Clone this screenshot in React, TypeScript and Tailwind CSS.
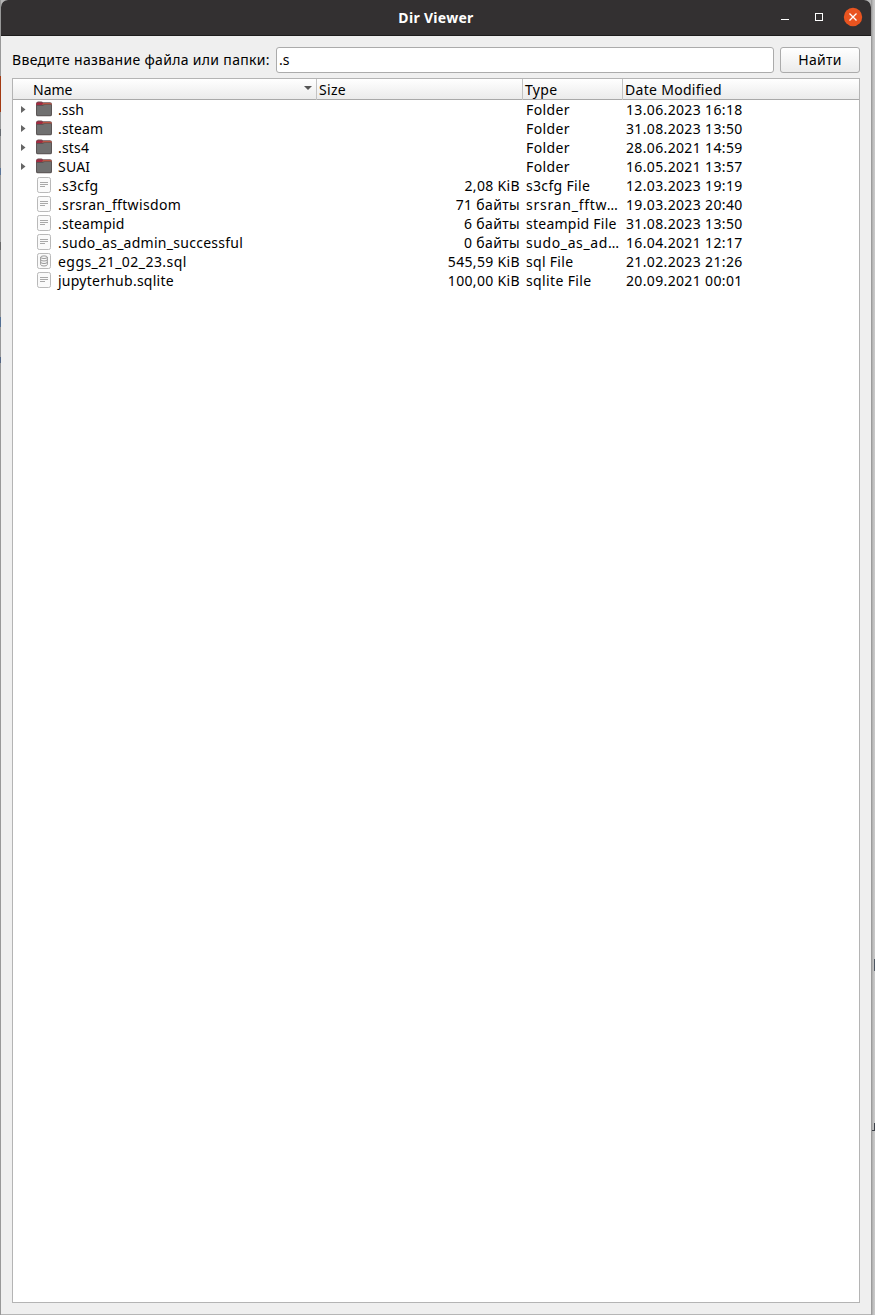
import React from "react";

type Kind = "folder" | "text" | "db";
type Row = { name: string; kind: Kind; size: string; type: string; date: string; track: string; typeTrack: string };

const rows: Row[] = [
  { name: ".ssh", kind: "folder", size: "", type: "Folder", date: "13.06.2023 16:18", track: "", typeTrack: "tracking-[0.4px]" },
  { name: ".steam", kind: "folder", size: "", type: "Folder", date: "31.08.2023 13:50", track: "tracking-[0.15px]", typeTrack: "tracking-[0.4px]" },
  { name: ".sts4", kind: "folder", size: "", type: "Folder", date: "28.06.2021 14:59", track: "tracking-[0.2px]", typeTrack: "tracking-[0.4px]" },
  { name: "SUAI", kind: "folder", size: "", type: "Folder", date: "16.05.2021 13:57", track: "tracking-[0.2px]", typeTrack: "tracking-[0.4px]" },
  { name: ".s3cfg", kind: "text", size: "2,08 KiB", type: "s3cfg File", date: "12.03.2023 19:19", track: "tracking-[0.3px]", typeTrack: "tracking-[0.33px]" },
  { name: ".srsran_fftwisdom", kind: "text", size: "71 байты", type: "srsran_fftw…", date: "19.03.2023 20:40", track: "tracking-[0.34px]", typeTrack: "tracking-[0.75px]" },
  { name: ".steampid", kind: "text", size: "6 байты", type: "steampid File", date: "31.08.2023 13:50", track: "tracking-[0.15px]", typeTrack: "tracking-[0.25px]" },
  { name: ".sudo_as_admin_successful", kind: "text", size: "0 байты", type: "sudo_as_ad…", date: "16.04.2021 12:17", track: "tracking-[0.27px]", typeTrack: "tracking-[0.6px]" },
  { name: "eggs_21_02_23.sql", kind: "db", size: "545,59 KiB", type: "sql File", date: "21.02.2023 21:26", track: "tracking-[0.45px]", typeTrack: "tracking-[0.3px]" },
  { name: "jupyterhub.sqlite", kind: "text", size: "100,00 KiB", type: "sqlite File", date: "20.09.2021 00:01", track: "tracking-[0.25px]", typeTrack: "tracking-[0.36px]" },
];

function FolderIcon() {
  return (
    <svg width="16" height="16" viewBox="0 0 16 16" className="block">
      <path d="M0 3Q0 .5 2 .5H5.3Q6.3 .5 6.8 1.3H14Q16 1.3 16 3.3V8H0Z" fill="#6c5155" />
      <path d="M.4 2.2Q.6 1.5 2 1.5H5.6Q6.6 1.5 7.2 2.4L6 4.5H.4Z" fill="#a32a40" />
      <path d="M7 2.2H14.2Q15.7 2.2 15.7 3.6V4.2H6Z" fill="#d2583f" />
      <path d="M0 5.1Q0 4 1.2 4H5.6Q6.5 4 7 3.6Q7.5 3.2 8.3 3.2H14.7Q16 3.2 16 4.4V13.4Q16 15.3 14.2 15.3H1.8Q0 15.3 0 13.4Z" fill="#5b5555" />
      <path d="M1 5H5.8Q6.9 5 7.6 4.5Q8.1 4.1 8.7 4.1H15V13.1Q15 14.3 13.8 14.3H2.2Q1 14.3 1 13.1Z" fill="#707070" />
    </svg>
  );
}

function FileIcon({ db }: { db: boolean }) {
  return (
    <svg width="16" height="16" viewBox="0 0 16 16" className="block">
      <rect x="1.5" y=".5" width="13" height="15" rx="1.8" fill="#fafafa" stroke="#b9b9b9" />
      {db ? (
        <g fill="none" stroke="#8c8c8c" strokeWidth=".9">
          <ellipse cx="8" cy="4.2" rx="3.3" ry="1.3" />
          <path d="M4.7 4.2V11.6Q4.7 13 8 13T11.3 11.6V4.2M4.7 6.6Q4.7 8 8 8T11.3 6.6M4.7 9.1Q4.7 10.5 8 10.5T11.3 9.1" />
        </g>
      ) : (
        <path d="M4 5.5H12M4 7.5H12M4 9.5H9" stroke="#a8a8a8" />
      )}
    </svg>
  );
}

const cols = "grid grid-cols-[304px_206px_100px_1fr]";

export default function App() {
  return (
    <div className="flex h-[1315px] w-[875px] overflow-hidden bg-[#b5b5b5] font-['Noto_Sans',sans-serif] text-[14px] text-black">
      <div className="flex w-px shrink-0 flex-col bg-[#989898]">
        <div className="mt-[76px] h-[36px] bg-[#a33a12]" />
        <div className="mt-[17px] h-[7px] bg-[#666b70]" />
        <div className="mt-[32px] h-[7px] bg-[#5b7497]" />
        <div className="mt-[67px] h-[8px] bg-[#696969]" />
        <div className="mt-[67px] h-[10px] bg-[#536f93]" />
        <div className="mt-[30px] h-[6px] bg-[#536583]" />
      </div>
      <div className="flex h-[1314px] w-[870px] shrink-0 flex-col rounded-t-[7px] bg-[#efefef]">
        <header className="flex h-[36px] shrink-0 items-center rounded-t-[7px] border-b border-[#1d1c1c] bg-[#333031] text-white">
          <div className="w-[95px]" />
          <h1 className="flex-1 text-center text-[14px] leading-[20px] font-bold tracking-[0.3px]">Dir Viewer</h1>
          <div className="flex w-[95px] items-center">
            <svg width="95" height="35" viewBox="0 0 95 35" className="block">
              <path d="M5 19.5H13" stroke="#fff" />
              <rect x="39.5" y="13.5" width="7" height="7" fill="none" stroke="#fff" />
              <circle cx="77" cy="17" r="9.2" fill="#e95420" />
              <path d="M73.5 13.5L80.5 20.5M80.5 13.5L73.5 20.5" stroke="#fff" strokeWidth="1.3" />
            </svg>
          </div>
        </header>
        <div className="mx-[11px] mt-[11px] flex h-[25px] shrink-0">
          <label htmlFor="query" className="w-[264px] shrink-0 leading-[26px] tracking-[0.32px] whitespace-nowrap">Введите название файла или папки:</label>
          <input id="query" defaultValue=".s" className="h-[26px] w-[498px] rounded-[3px] border border-[#ababab] bg-white px-[2px] pb-[2px] outline-none" />
          <button className="ml-[6px] h-[26px] w-[80px] rounded-[3px] border border-[#ababab] bg-linear-to-b from-white to-[#ebebeb] leading-[24px] tracking-[0.25px]">Найти</button>
        </div>
        <main className="mx-[11px] mt-[6px] h-[1225px] border border-[#b4b4b4] bg-white">
          <div className={`${cols} h-[21px] border-b border-[#a9a9a9] bg-linear-to-b from-white to-[#ebebeb] leading-[21px] tracking-[0.3px]`}>
            <div className="flex items-center justify-between border-r border-[#c3c3c3] pr-[4px] pl-[20px]">
              <span className="tracking-normal">Name</span>
              <svg width="8" height="4" viewBox="0 0 8 4" className="mb-[3px]"><path d="M0 0H8L4 4Z" fill="#555" /></svg>
            </div>
            <div className="border-r border-[#c3c3c3] pl-[2px]">Size</div>
            <div className="border-r border-[#c3c3c3] pl-[2px]">Type</div>
            <div className="pl-[2px]">Date Modified</div>
          </div>
          {rows.map((r) => (
            <div key={r.name} className={`${cols} h-[19px] leading-[20px] whitespace-nowrap`}>
              <div className="flex">
                <div className="flex w-[23px] pt-[6px] pl-[8px]">
                  {r.kind === "folder" && <svg width="5" height="7" viewBox="0 0 5 7"><path d="M0 0L4.5 3.5L0 7Z" fill="#666" /></svg>}
                </div>
                <div className="w-[22px] pt-px">{r.kind === "folder" ? <FolderIcon /> : <FileIcon db={r.kind === "db"} />}</div>
                <span className={r.track}>{r.name}</span>
              </div>
              <div className="pr-[3px] text-right tracking-[0.34px]">{r.size}</div>
              <div className={`pl-[3px] ${r.typeTrack}`}>{r.type}</div>
              <div className="pl-[3px] tracking-[0.35px]">{r.date}</div>
            </div>
          ))}
        </main>
      </div>
      <div className="flex w-[4px] shrink-0 flex-col bg-linear-to-r from-[#909090] via-[#bdbdbd] to-[#cbcbcb]">
        <div className="mt-[959px] ml-[3px] h-[12px] bg-[#4d5661]" />
        <div className="mt-[152px] ml-[3px] h-[7px] bg-[#3c4148]" />
        <div className="ml-px h-px bg-[#3c4148]" />
      </div>
    </div>
  );
}
